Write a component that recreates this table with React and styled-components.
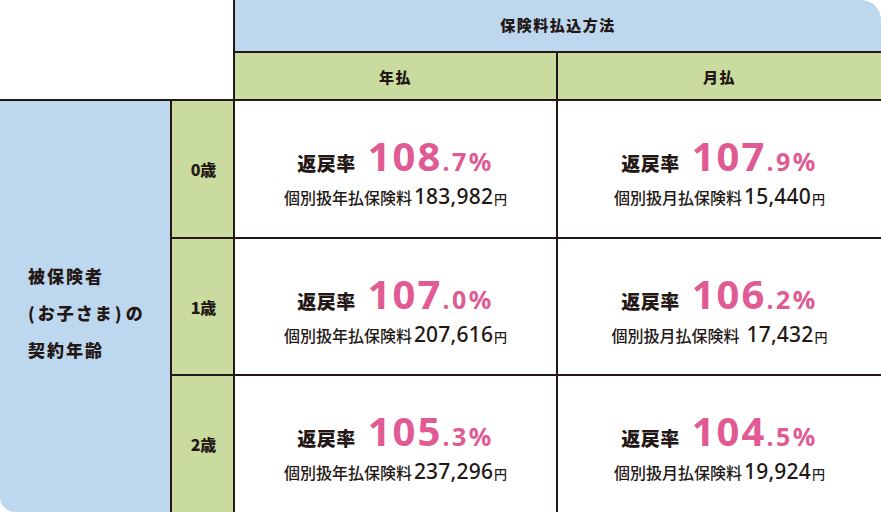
import React from "react";
import styled, { createGlobalStyle } from "styled-components";

const GlobalStyle = createGlobalStyle`
  html, body { margin: 0; padding: 0; background: #fff; }
  body { font-family: "Noto Sans CJK JP", "Noto Sans", sans-serif; color: #231815; }
`;

const LINE = "2px solid #231815";
const BLUE = "#bdd7ee";
const GREEN = "#c9db9f";
const PINK = "#e05a93";

const Table = styled.div`
  display: grid;
  grid-template-columns: 170px 63px 323px 325px;
  grid-template-rows: 51px 50px 136px 137px 138px;
  width: 881px;
  height: 512px;
  overflow: hidden;
`;

const Corner = styled.div`
  grid-column: 1 / 3;
  grid-row: 1 / 3;
  background: #fff;
  border-bottom: ${LINE};
`;

const MethodHeader = styled.div`
  grid-column: 3 / 5;
  grid-row: 1;
  background: ${BLUE};
  border-left: ${LINE};
  border-top-right-radius: 20px;
  display: flex;
  align-items: center;
  justify-content: center;
  font-size: 15px;
  font-weight: 900;
  letter-spacing: 1.5px;
  padding-bottom: 2px;
`;

const SubHeader = styled.div`
  grid-column: ${(p) => p.$col};
  grid-row: 2;
  background: ${GREEN};
  border-left: ${LINE};
  border-top: ${LINE};
  border-bottom: ${LINE};
  display: flex;
  align-items: center;
  justify-content: center;
  font-size: 15px;
  font-weight: 900;
  letter-spacing: 1.5px;
`;

const SideLabel = styled.div`
  grid-column: 1;
  grid-row: 3 / 6;
  background: ${BLUE};
  border-bottom-left-radius: 15px;
  display: flex;
  flex-direction: column;
  justify-content: center;
  padding-left: 28px;
  padding-top: 12px;
  font-size: 17px;
  font-weight: 900;
  letter-spacing: 2px;
  line-height: 37px;
`;

const Paren = styled.span`
  letter-spacing: 0;
  margin: ${(p) => (p.$open ? "0 3px 0 0" : "0 4px 0 1px")};
`;

const AgeCell = styled.div`
  grid-column: 2;
  grid-row: ${(p) => p.$row};
  background: ${GREEN};
  border-left: ${LINE};
  border-top: ${(p) => (p.$first ? "none" : LINE)};
  display: flex;
  align-items: center;
  justify-content: center;
  font-size: 16px;
  font-weight: 900;
  padding-left: 2px;
`;

const ValueCell = styled.div`
  grid-column: ${(p) => p.$col};
  grid-row: ${(p) => p.$row};
  background: #fff;
  border-left: ${LINE};
  border-top: ${(p) => (p.$first ? "none" : LINE)};
  display: flex;
  flex-direction: column;
  align-items: center;
  justify-content: center;
`;

const RateLine = styled.div`
  display: flex;
  align-items: baseline;
  white-space: nowrap;
  height: 48px;
`;

const RateLabel = styled.span`
  font-size: 19px;
  font-weight: 900;
  letter-spacing: 0.5px;
  margin-right: 12px;
`;

const RateBig = styled.span`
  font-family: "Noto Sans", sans-serif;
  color: ${PINK};
  font-size: 40px;
  font-weight: 700;
  letter-spacing: 2px;
`;

const RateSmall = styled.span`
  font-family: "Noto Sans", sans-serif;
  color: ${PINK};
  font-size: 25px;
  font-weight: 700;
  letter-spacing: 2.5px;
`;

const PremiumLine = styled.div`
  display: flex;
  align-items: baseline;
  white-space: nowrap;
  margin-top: 6px;
`;

const PremiumLabel = styled.span`
  font-size: 16px;
  font-weight: 500;
  margin-right: ${(p) => (p.$wide ? "7px" : "2px")};
`;

const PremiumNum = styled.span`
  font-family: "Noto Sans", sans-serif;
  font-size: 21px;
  font-weight: 500;
  letter-spacing: 0.2px;
`;

const Yen = styled.span`
  font-size: 13px;
  font-weight: 500;
  margin-left: 1px;
`;

const rows = [
  {
    age: "0歳",
    y: { big: "108", small: ".7%", label: "個別扱年払保険料", num: "183,982" },
    m: { big: "107", small: ".9%", label: "個別扱月払保険料", num: "15,440" },
  },
  {
    age: "1歳",
    y: { big: "107", small: ".0%", label: "個別扱年払保険料", num: "207,616" },
    m: { big: "106", small: ".2%", label: "個別扱月払保険料", num: "17,432", wide: true },
  },
  {
    age: "2歳",
    y: { big: "105", small: ".3%", label: "個別扱年払保険料", num: "237,296" },
    m: { big: "104", small: ".5%", label: "個別扱月払保険料", num: "19,924" },
  },
];

function Value({ d, col, row, first }) {
  return (
    <ValueCell $col={col} $row={row} $first={first}>
      <RateLine>
        <RateLabel>返戻率</RateLabel>
        <RateBig>{d.big}</RateBig>
        <RateSmall>{d.small}</RateSmall>
      </RateLine>
      <PremiumLine>
        <PremiumLabel $wide={d.wide}>{d.label}</PremiumLabel>
        <PremiumNum>{d.num}</PremiumNum>
        <Yen>円</Yen>
      </PremiumLine>
    </ValueCell>
  );
}

export default function App() {
  return (
    <>
      <GlobalStyle />
      <Table>
        <Corner />
        <MethodHeader>保険料払込方法</MethodHeader>
        <SubHeader $col={3}>年払</SubHeader>
        <SubHeader $col={4}>月払</SubHeader>
        <SideLabel>
          <div>被保険者</div>
          <div>
            <Paren $open>(</Paren>お子さま<Paren>)</Paren>の
          </div>
          <div>契約年齢</div>
        </SideLabel>
        {rows.map((r, i) => (
          <React.Fragment key={r.age}>
            <AgeCell $row={i + 3} $first={i === 0}>{r.age}</AgeCell>
            <Value d={r.y} col={3} row={i + 3} first={i === 0} />
            <Value d={r.m} col={4} row={i + 3} first={i === 0} />
          </React.Fragment>
        ))}
      </Table>
    </>
  );
}
